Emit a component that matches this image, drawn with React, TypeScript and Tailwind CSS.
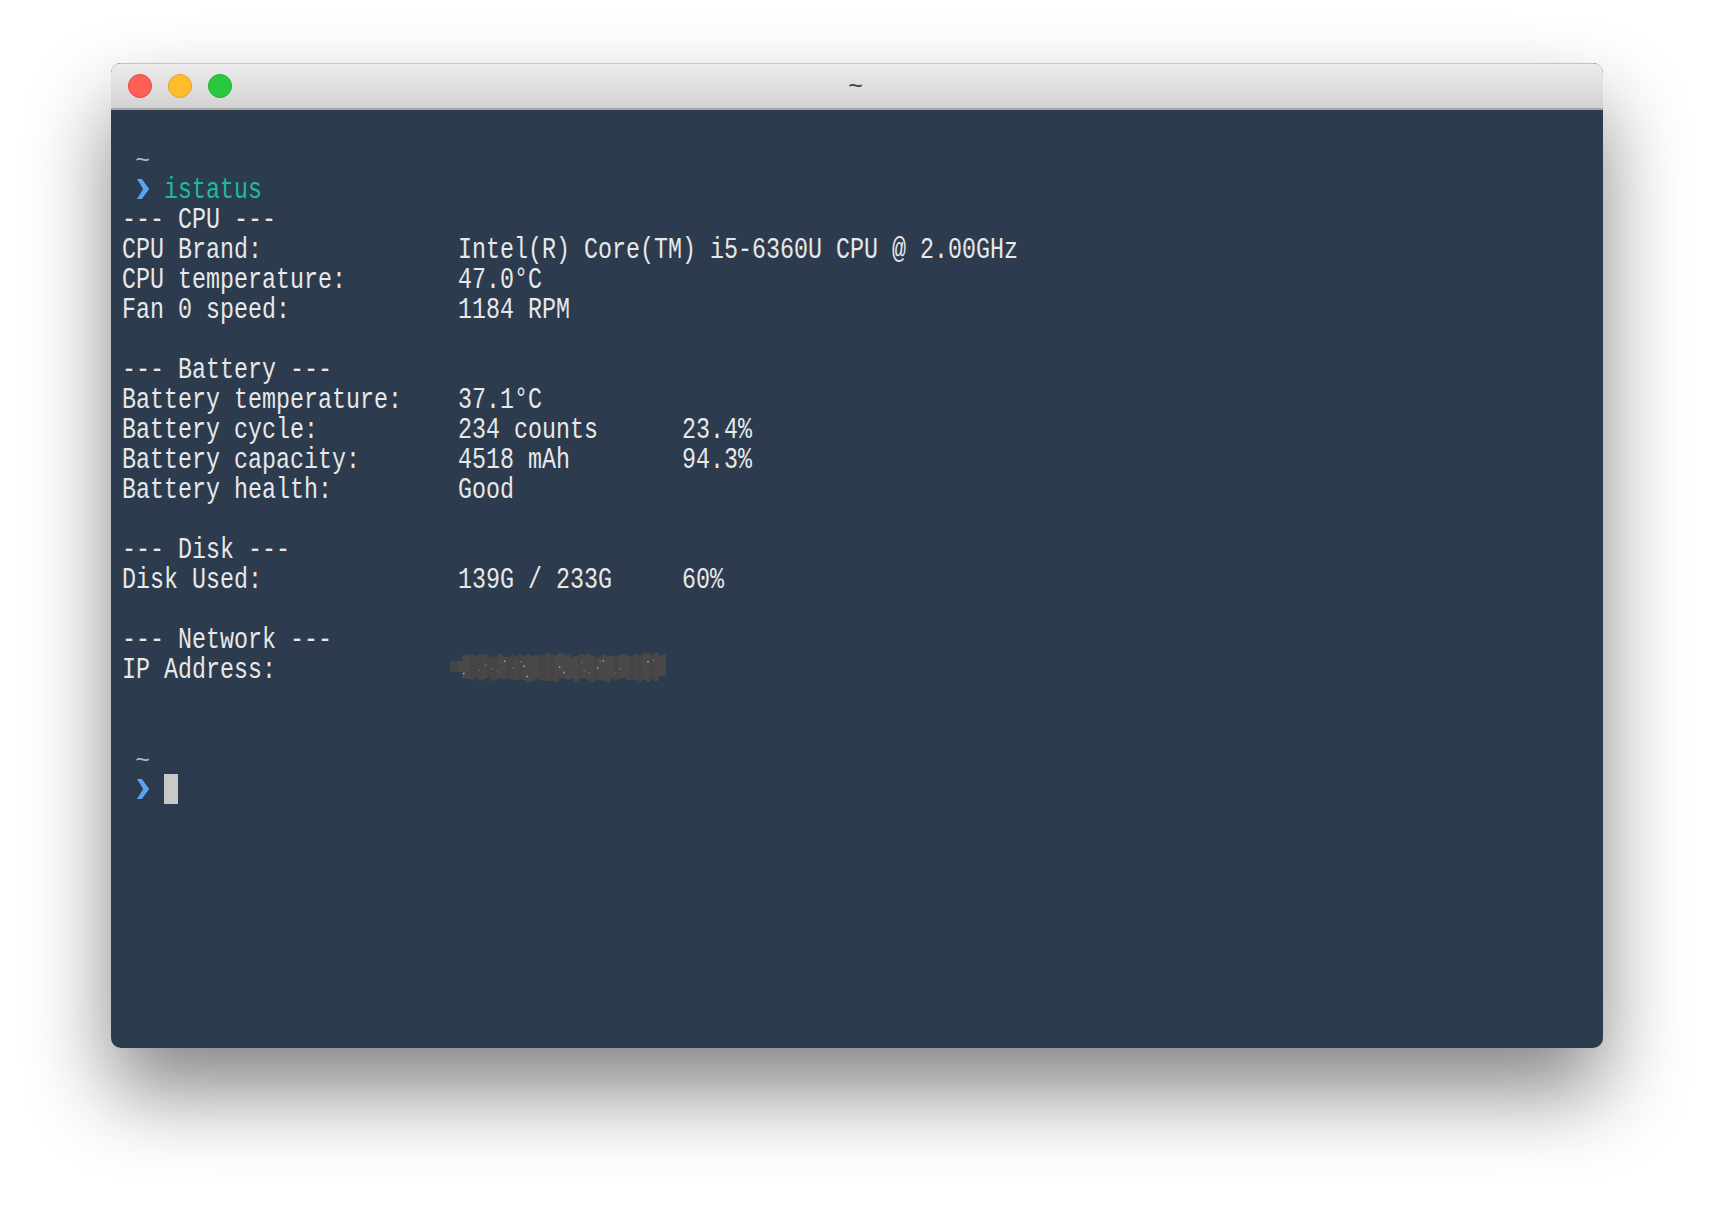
const font = { fontFamily: '"Liberation Mono", monospace' };

const lines = [
  "--- CPU ---",
  "CPU Brand:              Intel(R) Core(TM) i5-6360U CPU @ 2.00GHz",
  "CPU temperature:        47.0°C",
  "Fan 0 speed:            1184 RPM",
  "",
  "--- Battery ---",
  "Battery temperature:    37.1°C",
  "Battery cycle:          234 counts      23.4%",
  "Battery capacity:       4518 mAh        94.3%",
  "Battery health:         Good",
  "",
  "--- Disk ---",
  "Disk Used:              139G / 233G     60%",
  "",
  "--- Network ---",
];

// cheap repeatable noise for the blurred-out IP
const noise = (n: number) => {
  const v = Math.sin(n * 12.9898) * 43758.5453;
  return v - Math.floor(v);
};

function Line({ children }: { children?: React.ReactNode }) {
  return (
    <div className="h-[30px] leading-[30px] whitespace-pre">
      <span className="inline-block origin-[0_33%] scale-y-[1.28]">{children}</span>
    </div>
  );
}

function Chevron() {
  return (
    <svg width="14" height="22" viewBox="0 0 14 22" className="shrink-0">
      <path d="M1 1h4.8l7.4 10-7.4 10H1l6.2-10z" fill="#5aa5f2" />
    </svg>
  );
}

function Tilde() {
  return (
    <div className="h-[30px] pl-[13px] pt-[3px] leading-[30px] text-[25px] text-[#aeb6c0]">~</div>
  );
}

function Redacted() {
  const cols = Array.from({ length: 54 }, (_, i) => i);
  return (
    <svg width="216" height="30" viewBox="0 0 216 30" className="shrink-0">
      {cols.map((i) => {
        const top = i < 3 ? 9 : 1 + noise(i) * 4 + (i > 50 ? -1 : 0);
        const bottom = i < 3 ? 20 : i > 51 ? 24 : 26 + noise(i + 70) * 4;
        return (
          <rect
            key={i}
            x={i * 4}
            y={top}
            width="4.5"
            height={bottom - top}
            fill={noise(i + 30) > 0.5 ? "#454545" : "#484848"}
          />
        );
      })}
      {cols.slice(3, 51).filter((i) => noise(i + 3) > 0.55).map((i) => (
        <rect
          key={`s${i}`}
          x={i * 4 + noise(i + 5) * 3}
          y={6 + noise(i + 11) * 18}
          width="1.5"
          height="1.5"
          fill={noise(i + 17) > 0.5 ? "#a8a8a8" : "#6e6e6e"}
        />
      ))}
    </svg>
  );
}

export default function App() {
  return (
    <div className="min-h-[1208px] bg-white pt-[63px] pl-[111px] overflow-hidden">
      <div className="w-[1492px] h-[985px] rounded-[10px] overflow-hidden flex flex-col bg-[#2d3b4e] shadow-[0_44px_84px_rgba(0,0,0,0.48)]">
        <div className="relative h-[47px] shrink-0 flex items-center gap-4 pl-[17px] border-t border-[#c4c4c4] border-b-2 border-b-[#a6a6a6] bg-gradient-to-b from-[#ececec] to-[#d2d2d2]">
          <span className="w-6 h-6 rounded-full bg-[#ff5f57] border border-[#e5483f]" />
          <span className="w-6 h-6 rounded-full bg-[#ffbd2e] border border-[#e2a51f]" />
          <span className="w-6 h-6 rounded-full bg-[#28c93f] border border-[#20ad33]" />
          <span className="absolute left-0 right-[3px] pt-[3px] text-center text-[25px] text-[#444]" style={font}>~</span>
        </div>
        <div className="pt-[34px] pl-[11px] text-[23.33px] text-[#e6e8ea]" style={font}>
          <Tilde />
          <div className="h-[30px] pl-[14px] flex items-center gap-[14px]">
            <Chevron />
            <Line><span className="text-[#1abc9c]">istatus</span></Line>
          </div>
          {lines.map((text, i) => (
            <Line key={i}>{text}</Line>
          ))}
          <div className="h-[30px] flex items-center">
            <div className="w-[328px]"><Line>IP Address:</Line></div>
            <div className="-mt-[4px]"><Redacted /></div>
          </div>
          <div className="h-[60px]" />
          <Tilde />
          <div className="h-[30px] pl-[14px] flex items-center gap-[14px]">
            <Chevron />
            <span className="w-[14px] h-[30px] bg-[#c9c9c9]" />
          </div>
        </div>
      </div>
    </div>
  );
}
